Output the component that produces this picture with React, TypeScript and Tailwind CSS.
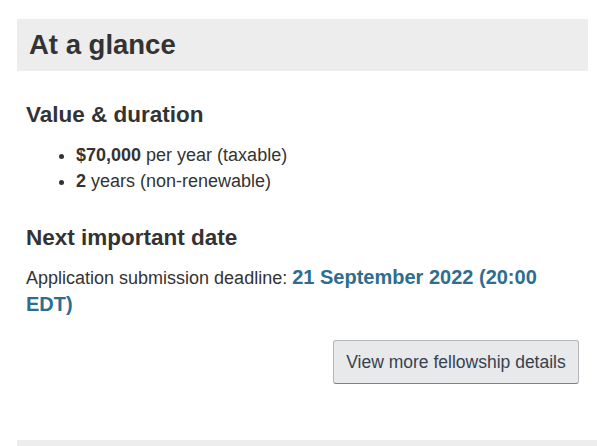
export default function App() {
  return (
    <div className="w-[597px] h-[446px] overflow-hidden bg-white pt-[19px] pl-[17px] font-['Liberation_Sans',Arial,sans-serif] text-[#333333]">
      <div className="mr-[9px]">
        <div className="h-[52px] bg-[#ededed] px-[12px] flex items-center">
          <h2 className="text-[27.5px] font-bold leading-none">At a glance</h2>
        </div>
        <div className="pl-[9px]">
          <h3 className="mt-[31px] text-[22.5px] font-bold leading-[26px]">Value &amp; duration</h3>
          <ul className="mt-[14px] list-disc pl-[50px] text-[18px] leading-[26px]">
            <li>
              <strong>$70,000</strong> per year (taxable)
            </li>
            <li>
              <strong>2</strong> years (non-renewable)
            </li>
          </ul>
          <h3 className="mt-[31px] text-[22.5px] font-bold leading-[26px]">Next important date</h3>
          <p className="mt-[13px] text-[18px] leading-[26px]">
            Application submission deadline:{" "}
            <strong className="text-[20px] text-[#2f6d8f]">21 September 2022 (20:00 EDT)</strong>
          </p>
        </div>
        <div className="mt-[22px] pr-[9px] flex justify-end">
          <button className="h-[44px] w-[246px] rounded-[3px] border border-[#b4b6ba] border-b-[#7d8086] bg-[#e8e9eb] text-[17.5px] text-[#36424f]">
            View more fellowship details
          </button>
        </div>
      </div>
      <div className="mt-[56px] h-[20px] bg-[#ededed]" />
    </div>
  );
}
